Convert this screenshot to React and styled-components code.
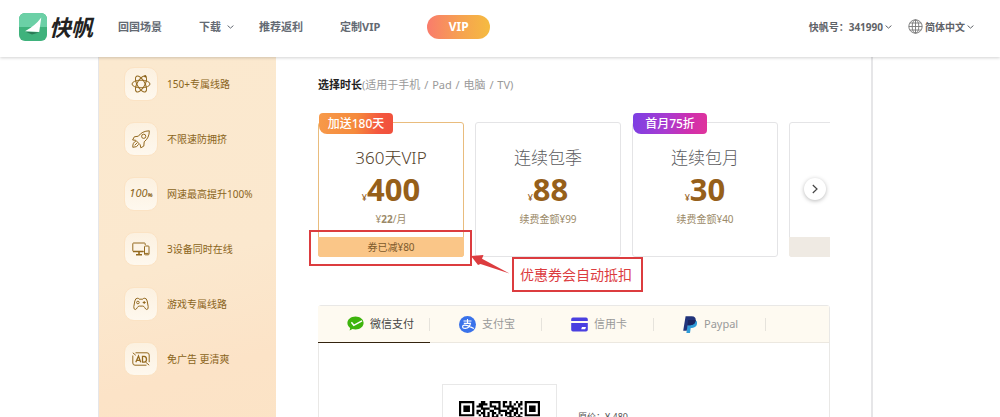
import React from "react";
import styled, { createGlobalStyle, css } from "styled-components";

const GlobalStyle = createGlobalStyle`
  * { box-sizing: border-box; }
  body {
    margin: 0;
    background: #fff;
    color: #666;
    font-family: "Noto Sans", "Noto Sans CJK SC", sans-serif;
    font-size: 10px;
  }
  button { font: inherit; color: inherit; border: 0; background: none; padding: 0; cursor: pointer; }
  a { color: inherit; text-decoration: none; }
  svg { display: block; flex: none; }
  h1, h2, p, ul { margin: 0; padding: 0; font-weight: inherit; }
`;

const Page = styled.div`
  height: 100vh;
  display: flex;
  flex-direction: column;
  overflow: hidden;
`;

/* ---------- header ---------- */
const Header = styled.header`
  flex: none;
  display: flex;
  align-items: center;
  height: 57px;
  padding: 0 26px 4px 19px;
  background: #fff;
  box-shadow: 0 1px 3px rgba(0, 0, 0, 0.18);
  position: relative;
  z-index: 2;
  white-space: nowrap;
`;

const Brand = styled.a`
  display: flex;
  align-items: center;
  gap: 2px;
  width: 99px;
  color: #222;
  font-size: 22px;
  line-height: 28px;
  font-weight: 700;
  font-style: italic;
`;

const Nav = styled.nav`
  display: flex;
  align-items: center;
  gap: 37px;
  flex: 1;
  color: #646a73;
  font-size: 11px;
  font-weight: 700;
  line-height: 16px;
`;

const MenuButton = styled.button`
  display: flex;
  align-items: center;
  gap: 2px;
  font-weight: 700;
`;

const NavMenuButton = styled(MenuButton)`
  gap: 6px;
  margin-right: -12px;
`;

const VipLink = styled.a`
  display: block;
  width: 63px;
  margin-left: 10px;
  border-radius: 12px;
  background: linear-gradient(90deg, #f97c6c, #f6a350 55%, #f5bb40);
  color: #fff;
  font-size: 12px;
  line-height: 24px;
  text-align: center;
`;

const Account = styled.div`
  display: flex;
  gap: 16px;
  color: #5f6368;
  font-size: 10px;
  line-height: 16px;
`;

/* ---------- body frame ---------- */
const Main = styled.main`
  flex: 1;
  min-height: 0;
  overflow-y: auto;
  scrollbar-width: none;
  padding: 0 127px 0 98px;
`;

const Frame = styled.div`
  display: flex;
  min-height: 520px;
  border: solid #e6e6e8;
  border-width: 0 2px 0 1px;
`;

const Sidebar = styled.ul`
  flex: none;
  display: flex;
  flex-direction: column;
  gap: 21px;
  width: 177px;
  padding: 10px 0 0 25px;
  list-style: none;
  background: linear-gradient(165deg, #fbe9cf, #fbe8ce 40%, #fce3c7 60%, #fae4c4);
`;

const Feature = styled.li`
  display: flex;
  align-items: center;
  gap: 9px;
  color: #8a6420;
  line-height: 16px;
  white-space: nowrap;
`;

const FeatureIcon = styled.span`
  display: flex;
  align-items: center;
  justify-content: center;
  width: 34px;
  height: 34px;
  border: 1px solid #fbe3c4;
  border-radius: 10px;
  background: linear-gradient(#fcf1e0, #fef8ee);
`;

const Percent = styled.span`
  font-style: italic;
  font-size: 11px;
  small { font-size: 6px; font-weight: 700; }
`;

const Content = styled.section`
  flex: 1;
  min-width: 0;
  padding: 20px 41px 0 42px;
`;

const Heading = styled.h1`
  color: #999;
  font-size: 11px;
  line-height: 16px;
  strong { color: #222; }
`;

const Slash = styled.span`
  margin: 0 1px;
`;

/* ---------- plans ---------- */
const PlanArea = styled.div`
  position: relative;
  margin-top: 19px;
`;

const PlanStrip = styled.div`
  display: flex;
  gap: 11px;
  padding-top: 10px;
  overflow: hidden;
`;

const PlanCard = styled.button`
  position: relative;
  flex: none;
  display: flex;
  flex-direction: column;
  align-items: center;
  width: 146px;
  height: 135px;
  padding-top: 22px;
  border: 1px solid ${(p) => (p.$selected ? "#e9bc7d" : "#e4e4e6")};
  border-radius: 3px;
  background: #fff;
`;

const PlanName = styled.span`
  color: ${(p) => (p.$selected ? "#51402a" : "#5c5c60")};
  font-size: 17px;
  font-weight: 300;
  line-height: 26px;
`;

const PlanPrice = styled.span`
  color: #96601a;
  font-size: 31px;
  font-weight: 700;
  line-height: 36px;
  small { font-size: 9px; font-weight: 400; line-height: 1; }
`;

const PlanNote = styled.span`
  margin-top: 4px;
  color: #9b8a68;
  font-size: 10px;
  line-height: 16px;
`;

const PlanFooter = styled.span`
  align-self: stretch;
  height: 20px;
  margin: auto -1px -1px;
  border-radius: 0 0 3px 3px;
  background: ${(p) => (p.$selected ? "#fac688" : "#efeae3")};
  color: #7d5a2b;
  line-height: 20px;
`;

const Badge = styled.span`
  position: absolute;
  top: -10px;
  left: 0;
  width: 74px;
  border-radius: 4px 4px 4px 8px;
  color: #fff;
  font-size: 12px;
  font-weight: 500;
  line-height: 21px;
  ${(p) =>
    p.$tone === "purple"
      ? css`background: linear-gradient(100deg, #7b3fe4, #a93bd0 45%, #cf2fae 75%, #e0349a);`
      : css`background: linear-gradient(100deg, #f79a4a, #f58a3c 50%, #f4573f 80%, #f0503c);`}
`;

const NextButton = styled.button`
  position: absolute;
  top: 66px;
  right: 4px;
  display: flex;
  align-items: center;
  justify-content: center;
  width: 22px;
  height: 22px;
  border-radius: 50%;
  background: #fff;
  box-shadow: 0 1px 4px rgba(0, 0, 0, 0.28);
`;

const CouponFrame = styled.div`
  position: absolute;
  top: 118px;
  left: -9px;
  width: 163px;
  height: 36px;
  border: 2px solid #dc3c3f;
  pointer-events: none;
`;

const CouponHint = styled.div`
  position: absolute;
  top: 140px;
  left: 153px;
  display: flex;
  align-items: flex-start;
  pointer-events: none;
`;

const HintText = styled.p`
  margin-top: 5px;
  padding: 0 9px 0 6px;
  border: 2px solid #dc3c3f;
  background: #fff;
  color: #dc3c3f;
  font-size: 14px;
  line-height: 31px;
  white-space: nowrap;
`;

/* ---------- payment ---------- */
const Payment = styled.section`
  margin-top: 48px;
  min-height: 200px;
  border: 1px solid #e9e8e6;
  border-radius: 3px;
`;

const Tabs = styled.div`
  display: flex;
  height: 37px;
  margin-left: -1px;
  background: #fefaf1;
  border-bottom: 1px solid #ece8e0;
`;

const Tab = styled.button`
  display: flex;
  align-items: center;
  gap: 6px;
  width: 112px;
  height: 37px;
  padding-left: 29px;
  font-size: 11px;
  line-height: 16px;
  color: ${(p) => (p.$active ? "#444" : "#999")};
  border-bottom: 1px solid ${(p) => (p.$active ? "#33230f" : "transparent")};
  &::after {
    content: "";
    width: 1px;
    height: 13px;
    margin-left: auto;
    background: #e6e3dc;
  }
`;

const PayBody = styled.div`
  display: flex;
  gap: 21px;
  padding: 41px 0 0 123px;
`;

const QrBox = styled.div`
  width: 115px;
  height: 115px;
  padding: 16px;
  border: 1px solid #e8e8e8;
`;

const OldPrice = styled.p`
  padding-top: 26px;
  color: #555;
  font-size: 9px;
  line-height: 14px;
`;

/* ---------- icons ---------- */
const Chevron = () => (
  <svg width="7" height="4" viewBox="0 0 7 4" fill="none" stroke="currentColor">
    <path d="M.6.6 3.5 3.1 6.4.6" />
  </svg>
);

const Logo = () => (
  <svg width="28" height="28" viewBox="0 0 28 28">
    <defs>
      <clipPath id="tile"><rect width="28" height="28" rx="6" /></clipPath>
    </defs>
    <g clipPath="url(#tile)">
      <rect width="28" height="28" fill="#3fb27c" />
      <rect width="28" height="14" fill="#6bd0a6" />
      <path d="M6 18.500 20 19.500 13 21.500z" fill="#2b7a56" />
    </g>
    <path d="M22.300 4.500 20.200 19 6 18.200Q16 13 22.300 4.500z" fill="#fff" />
  </svg>
);

const Globe = () => (
  <svg width="15" height="15" viewBox="0 0 15 15" fill="none" stroke="#777" strokeWidth=".9">
    <circle cx="7.5" cy="7.5" r="6.7" />
    <ellipse cx="7.5" cy="7.5" rx="3.3" ry="6.7" />
    <path d="M7.5.8v13.4M.8 7.5h13.4M1.8 4h11.4M1.8 11h11.4" />
  </svg>
);

const line = { fill: "none", stroke: "#93691f", strokeWidth: 1 };

const Atom = () => (
  <svg width="20" height="20" viewBox="0 0 20 20" {...line}>
    <ellipse cx="10" cy="10" rx="9" ry="3.8" />
    <ellipse cx="10" cy="10" rx="9" ry="3.8" transform="rotate(60 10 10)" />
    <ellipse cx="10" cy="10" rx="9" ry="3.8" transform="rotate(120 10 10)" />
    <circle cx="14.3" cy="2.3" r=".8" fill="#6b4a10" />
  </svg>
);

const Rocket = () => (
  <svg width="20" height="20" viewBox="0 0 20 20" {...line} strokeLinejoin="round">
    <path d="M18.3 1.8Q11 2 7.4 7.2L3.3 7.8 1.6 11l3.2.3 4.4 4.5.6 3 3-1.7.4-4.3q5.2-4 5.1-11z" />
    <circle cx="12.7" cy="7.3" r="2.1" />
    <path d="M4.8 12.4Q1.5 13.3 1.8 18.3q4.600.2 5.800-3M3.700 16.300l2.600-2.600" />
  </svg>
);

const Devices = () => (
  <svg width="18" height="14" viewBox="0 0 18 14" {...line}>
    <path d="M11.500 9.500H1.500q-.7 0-.7-.7V1.700q0-.7.7-.7h11q.7 0 .7.700V3" />
    <path d="M1 9.500h10.500M7 9.500v3M4 12.800h6" strokeWidth="1.600" />
    <rect x="12.500" y="4" width="4.500" height="8.800" rx=".8" />
    <path d="M13 11.400h3.500" />
  </svg>
);

const Gamepad = () => (
  <svg width="16" height="14" viewBox="0 0 16 14" {...line}>
    <path d="M4.800 1.200q-2.400-.2-3 2.800L.8 9.700q-.2 2.800 1.500 2.800 1 0 2-1.900.7-1.500 1.900-1.500h3.600q1.200 0 1.900 1.500 1 1.900 2 1.900 1.700 0 1.500-2.800l-1-5.700q-.6-3-3-2.800-1 .1-1.400 1H6.200q-.4-.9-1.400-1z" />
    <circle cx="4.900" cy="5.500" r="1.300" />
    <path d="M11.200 4v3M9.700 5.500h3" />
  </svg>
);

const NoAds = () => (
  <svg width="18" height="14" viewBox="0 0 18 14" {...line}>
    <path d="M3.500.8H15q2.200 0 2.200 2.200v7.200M14.500 13.200H3Q.8 13.200.8 11V3.500M.8.800l3 2.500M13.500 10l3.700 3.200" />
    <path d="M3.800 10.200 6.500 4l2.200 6.200M4.800 8.300h3.300M10.500 4.300v5.900h1.700q2.300-.3 2.300-3t-2.300-2.900z" strokeWidth="1.300" />
  </svg>
);

const WeChatPay = () => (
  <svg width="17" height="16" viewBox="0 0 17 16">
    <path d="M8.500.5C4 .5.400 3.400.400 7c0 2 1.100 3.800 2.800 5l-.6 2.500 2.900-1.400q1.400.4 3 .4c4.500 0 8.100-2.900 8.100-6.500S13 .5 8.500.5z" fill="#3eb40d" />
    <path d="m4.400 6.200 2.400 3.100L15 4.800" fill="none" stroke="#fff" strokeWidth="1.500" />
  </svg>
);

const Alipay = () => (
  <svg width="17" height="17" viewBox="0 0 17 17" fill="none" stroke="#fff" strokeWidth="1.100">
    <circle cx="8.500" cy="8.500" r="8.500" fill="#3a72ea" stroke="none" />
    <path d="M4.500 5h8M8.500 3v4.400M4.800 7.400h6.700q-1 4.800-5.200 5-2.700 0-2.700-1.700 0-1.600 2.300-1.600 2.500 0 9 3.400" />
  </svg>
);

const Card = () => (
  <svg width="17" height="15" viewBox="0 0 17 15">
    <path d="M2 .5h13q1.800 0 1.800 1.800V4H.2V2.300Q.2.500 2 .500zM.2 6h16.600v6.700q0 1.800-1.800 1.800H2q-1.800 0-1.800-1.800z" fill="#4a3fe0" />
    <path d="M11 10h4l-.8 2.300h-4z" fill="#fff" />
  </svg>
);

const PayPal = () => (
  <svg width="15" height="17" viewBox="0 0 15 17">
    <path d="M5 4h7.500q2.300 1.500 1.500 4-.9 3.700-5 3.900H7.700L7 17H3.400z" fill="#2f9bd8" />
    <path d="M2.600.2h6.100q4.500.2 4 4.300-.8 4.600-5.500 4.700H4.700l-1 5.600H.2z" fill="#21337a" />
    <path d="M5 4h7.700q-.3 4.900-5.500 5.200H4.600z" fill="#1b2560" />
  </svg>
);

/* ---------- QR code ---------- */
const QR_SIZE = 37;
const QR_TOP = [
  "001100111110110100101",
  "011110100010100101011",
  "111000111010111110010",
  "001111001110001011101",
  "110100110011110110100",
  "101101011010011101101",
  "010101010101010101010",
];

const inFinder = (x, y) => {
  const fx = x > QR_SIZE - 9 ? x - (QR_SIZE - 7) : x;
  const fy = y > QR_SIZE - 9 ? y - (QR_SIZE - 7) : y;
  if (fx > 7 || fy > 7 || (x > 8 && y > 8)) return null;
  const d = Math.max(Math.abs(fx - 3), Math.abs(fy - 3));
  return d === 3 || d <= 1;
};

const isDark = (x, y) => {
  const finder = inFinder(x, y);
  if (finder !== null) return finder;
  if (y < 7 && x >= 8 && x < 29) return QR_TOP[y][x - 8] === "1";
  return (x * x * 7 + y * 13 + x * y * 5) % 11 < 5;
};

const qrPath = Array.from({ length: QR_SIZE * QR_SIZE }, (_, i) => [i % QR_SIZE, Math.floor(i / QR_SIZE)])
  .filter(([x, y]) => isDark(x, y))
  .map(([x, y]) => `M${x} ${y}h1v1h-1z`)
  .join("");

const QrCode = () => (
  <svg width="81" height="81" viewBox="0 0 37 37" role="img" aria-label="微信支付">
    <path d={qrPath} fill="#000" />
  </svg>
);

/* ---------- data ---------- */
const features = [
  { icon: <Atom />, text: "150+专属线路" },
  { icon: <Rocket />, text: "不限速防拥挤" },
  { icon: <Percent>100<small>%</small></Percent>, text: "网速最高提升100%" },
  { icon: <Devices />, text: "3设备同时在线" },
  { icon: <Gamepad />, text: "游戏专属线路" },
  { icon: <NoAds />, text: "免广告 更清爽" },
];

const plans = [
  { name: "360天VIP", price: "400", note: <>¥<b>22</b>/月</>, badge: "加送180天", footer: "券已减¥80", selected: true },
  { name: "连续包季", price: "88", note: "续费金额¥99" },
  { name: "连续包月", price: "30", note: "续费金额¥40", badge: "首月75折", tone: "purple" },
];

const methods = [
  { icon: <WeChatPay />, name: "微信支付", active: true },
  { icon: <Alipay />, name: "支付宝" },
  { icon: <Card />, name: "信用卡" },
  { icon: <PayPal />, name: "Paypal" },
];

export default function App() {
  return (
    <Page>
      <GlobalStyle />
      <Header>
        <Brand href="#"><Logo />快帆</Brand>
        <Nav>
          <a href="#scene">回国场景</a>
          <NavMenuButton>下载<Chevron /></NavMenuButton>
          <a href="#rebate">推荐返利</a>
          <a href="#custom">定制VIP</a>
          <VipLink href="#vip">VIP</VipLink>
        </Nav>
        <Account>
          <MenuButton>快帆号：341990<Chevron /></MenuButton>
          <MenuButton><Globe />简体中文<Chevron /></MenuButton>
        </Account>
      </Header>
      <Main>
        <Frame>
          <Sidebar>
            {features.map((f) => (
              <Feature key={f.text}><FeatureIcon>{f.icon}</FeatureIcon>{f.text}</Feature>
            ))}
          </Sidebar>
          <Content>
            <Heading>
              <strong>选择时长</strong>(适用于手机 <Slash>/</Slash> Pad <Slash>/</Slash> 电脑 <Slash>/</Slash> TV)
            </Heading>
            <PlanArea>
              <PlanStrip>
                {plans.map((p) => (
                  <PlanCard key={p.name} $selected={p.selected} aria-pressed={!!p.selected}>
                    {p.badge && <Badge $tone={p.tone}>{p.badge}</Badge>}
                    <PlanName $selected={p.selected}>{p.name}</PlanName>
                    <PlanPrice><small>¥</small>{p.price}</PlanPrice>
                    <PlanNote>{p.note}</PlanNote>
                    {p.footer && <PlanFooter $selected>{p.footer}</PlanFooter>}
                  </PlanCard>
                ))}
                <PlanCard aria-pressed={false}><PlanFooter /></PlanCard>
              </PlanStrip>
              <NextButton aria-label="下一个">
                <svg width="6" height="10" viewBox="0 0 6 10" fill="none" stroke="#444" strokeWidth="1.200">
                  <path d="M.8 1 5 5 .8 9" />
                </svg>
              </NextButton>
              <CouponFrame />
              <CouponHint>
                <svg width="41" height="24" viewBox="0 0 41 24" fill="#dc3c3f">
                  <path d="M0 4 12.500 3 11 6.800 38.500 21.500 9.500 12 7 13z" />
                </svg>
                <HintText>优惠券会自动抵扣</HintText>
              </CouponHint>
            </PlanArea>
            <Payment>
              <Tabs role="tablist">
                {methods.map((m) => (
                  <Tab key={m.name} role="tab" aria-selected={!!m.active} $active={m.active}>{m.icon}{m.name}</Tab>
                ))}
              </Tabs>
              <PayBody>
                <QrBox><QrCode /></QrBox>
                <OldPrice>原价：¥ 480</OldPrice>
              </PayBody>
            </Payment>
          </Content>
        </Frame>
      </Main>
    </Page>
  );
}
